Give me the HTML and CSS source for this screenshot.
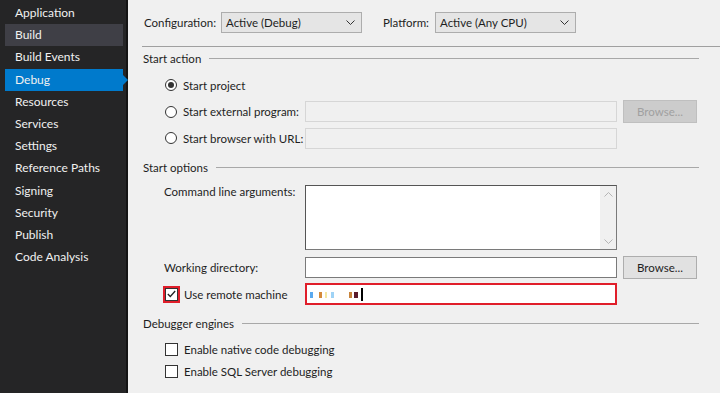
FILE: index.html
```html
<!DOCTYPE html>
<html lang="en">

<head>
    <meta charset="UTF-8">
    <title>Project Properties - Debug</title>
    <link rel="stylesheet" href="styles.css">
</head>

<body>
    <div class="app">
        <nav class="sidebar">
            <ul class="nav">
                <li>Application</li>
                <li class="hover">Build</li>
                <li>Build Events</li>
                <li class="active">Debug</li>
                <li>Resources</li>
                <li>Services</li>
                <li>Settings</li>
                <li>Reference Paths</li>
                <li>Signing</li>
                <li>Security</li>
                <li>Publish</li>
                <li>Code Analysis</li>
            </ul>
        </nav>

        <main class="page">
            <div class="toolbar">
                <span class="toolbar-label config-label">Configuration:</span>
                <div class="select">
                    <span>Active (Debug)</span>
                    <svg class="chevron" width="9" height="5" viewBox="0 0 9 5"><path d="M0.5 0.5 L4.5 4.5 L8.5 0.5" fill="none" stroke="#333" stroke-width="1"/></svg>
                </div>
                <span class="toolbar-label platform-label">Platform:</span>
                <div class="select">
                    <span>Active (Any CPU)</span>
                    <svg class="chevron" width="9" height="5" viewBox="0 0 9 5"><path d="M0.5 0.5 L4.5 4.5 L8.5 0.5" fill="none" stroke="#333" stroke-width="1"/></svg>
                </div>
            </div>

            <div class="rule"></div>

            <div class="section first-section"><span>Start action</span><div class="section-line"></div></div>

            <div class="field-row row-project">
                <label class="option"><span class="radio checked"></span>Start project</label>
            </div>
            <div class="field-row row-external">
                <label class="option"><span class="radio"></span>Start external program:</label>
                <div class="textbox disabled"></div>
                <button class="btn disabled">Browse...</button>
            </div>
            <div class="field-row row-url">
                <label class="option"><span class="radio"></span>Start browser with URL:</label>
                <div class="textbox disabled"></div>
            </div>

            <div class="section"><span>Start options</span><div class="section-line"></div></div>

            <div class="field-row row-args">
                <span class="field-label">Command line arguments:</span>
                <div class="textarea">
                    <div class="scrollbar">
                        <svg width="9" height="5" viewBox="0 0 9 5"><path d="M0.5 4.5 L4.5 0.5 L8.5 4.5" fill="none" stroke="#b5b5b5" stroke-width="1"/></svg>
                        <svg width="9" height="5" viewBox="0 0 9 5"><path d="M0.5 0.5 L4.5 4.5 L8.5 0.5" fill="none" stroke="#b5b5b5" stroke-width="1"/></svg>
                    </div>
                </div>
            </div>
            <div class="field-row row-workdir">
                <span class="field-label">Working directory:</span>
                <div class="textbox"></div>
                <button class="btn">Browse...</button>
            </div>
            <div class="field-row row-remote">
                <label class="option">
                    <span class="checkbox highlight">
                        <svg width="9" height="8" viewBox="0 0 9 8"><path d="M0.8 4 L3.3 6.5 L8.2 1" fill="none" stroke="#222" stroke-width="1.3"/></svg>
                    </span>Use remote machine
                </label>
                <!-- machine name is masked in the screenshot -->
                <div class="textbox highlight">
                    <span class="blob b1"></span>
                    <span class="blob b2"></span>
                    <span class="blob b3"></span>
                    <span class="blob b4"></span>
                    <span class="blob b5"></span>
                    <span class="blob b6"></span>
                    <span class="caret"></span>
                </div>
            </div>

            <div class="section"><span>Debugger engines</span><div class="section-line"></div></div>

            <div class="field-row row-native">
                <label class="option"><span class="checkbox"></span>Enable native code debugging</label>
            </div>
            <div class="field-row row-sql">
                <label class="option"><span class="checkbox"></span>Enable SQL Server debugging</label>
            </div>
        </main>
    </div>
</body>

</html>
```

FILE: styles.css
```css
* {
    margin: 0;
    padding: 0;
    box-sizing: border-box;
    font-family: 'Segoe UI', Lato, sans-serif;
}

body {
    background-color: #f0f0f0;
    font-size: 12px;
    color: #1e1e1e;
    overflow: hidden;
}

.app {
    display: flex;
    width: 720px;
    height: 393px;
}

/* left navigation */
.sidebar {
    width: 128px;
    flex-shrink: 0;
    background-color: #252526;
    border-right: 2px solid #141414;
}

.nav {
    list-style: none;
    padding-top: 2px;
}

.nav li {
    position: relative;
    height: 22.2px;
    line-height: 22px;
    margin-left: 5px;
    width: 118px;
    padding-left: 10px;
    color: #f1f1f1;
}

.nav li.hover {
    background-color: #3f3f46;
}

.nav li.active {
    background-color: #007acc;
}

.nav li.active::after {
    content: '';
    position: absolute;
    right: -5px;
    top: 6px;
    border-top: 5px solid transparent;
    border-bottom: 5px solid transparent;
    border-left: 5px solid #007acc;
}

/* main page */
.page {
    flex: 1;
    padding-top: 12px;
    padding-left: 14px;
    font-size: 11.5px;
}

.toolbar {
    display: flex;
    align-items: center;
    height: 21px;
    padding-left: 2px;
}

.config-label {
    width: 77px;
}

.platform-label {
    width: 52px;
    margin-left: 21px;
}

.select {
    width: 141px;
    height: 21px;
    background-color: #e5e5e5;
    border: 1px solid #adadad;
    display: flex;
    align-items: center;
    justify-content: space-between;
    padding: 0 4px 0 4px;
}

.chevron {
    margin-right: 2px;
}

.rule {
    height: 1px;
    background-color: #a0a0a0;
    margin-top: 13px;
}

.section {
    display: flex;
    align-items: center;
    gap: 8px;
    height: 16px;
    margin-top: 10px;
    margin-right: 21px;
    padding-left: 1px;
}

.first-section {
    margin-top: 3px;
}

.section-line {
    flex: 1;
    height: 1px;
    background-color: #a8a8a8;
}

.field-row {
    display: grid;
    grid-template-columns: 135px 312px 74px;
    column-gap: 6px;
    align-items: center;
    height: 22px;
    margin-left: 22px;
}

.option {
    display: flex;
    align-items: center;
    gap: 6px;
    white-space: nowrap;
}

.field-label {
    white-space: nowrap;
}

.radio {
    flex-shrink: 0;
    width: 12px;
    height: 12px;
    margin-left: 1px;
    border: 1px solid #333;
    border-radius: 50%;
    background-color: #fff;
    display: flex;
    align-items: center;
    justify-content: center;
}

.radio.checked::after {
    content: '';
    width: 6px;
    height: 6px;
    border-radius: 50%;
    background-color: #333;
}

.checkbox {
    flex-shrink: 0;
    width: 13px;
    height: 13px;
    margin-left: 1px;
    border: 1px solid #333;
    background-color: #fff;
    display: flex;
    align-items: center;
    justify-content: center;
}

.checkbox.highlight {
    outline: 2px solid #e01e2a;
    border-color: #333;
}

.textbox {
    height: 21px;
    background-color: #fff;
    border: 1px solid #7a7a7a;
    display: flex;
    align-items: center;
    padding-left: 5px;
}

.textbox.disabled {
    background-color: #f0f0f0;
    border-color: #d6d6d6;
}

.textbox.highlight {
    height: 22px;
    border: 2px solid #e01e2a;
    padding-left: 3px;
}

.blob {
    width: 3px;
    height: 6px;
    margin-top: 2px;
}

.b1 {
    background-color: #5aa9ef;
}

.b2 {
    background-color: #d48a3a;
    margin-left: 6px;
}

.b3 {
    width: 2px;
    background-color: #f3e7a2;
    margin-left: 3px;
}

.b4 {
    background-color: #9fd3f6;
    margin-left: 4px;
}

.b5 {
    background-color: #c8843c;
    margin-left: 15px;
}

.b6 {
    width: 4px;
    background-color: #5b1b2c;
    margin-left: 2px;
}

.caret {
    width: 2px;
    height: 13px;
    background-color: #000;
    margin-left: 3px;
}

.btn {
    height: 23px;
    font-size: 11.5px;
    background-color: #e1e1e1;
    border: 1px solid #adadad;
    color: #1e1e1e;
}

.btn.disabled {
    background-color: #cccccc;
    border-color: #bfbfbf;
    color: #a0a0a0;
}

.row-project {
    margin-top: 8px;
}

.row-external {
    margin-top: 4px;
}

.row-url {
    margin-top: 5px;
}

.row-args {
    align-items: start;
    height: auto;
    margin-top: 10px;
}

.textarea {
    height: 65px;
    background-color: #fff;
    border: 1px solid #7a7a7a;
    border-top-color: #555;
    border-left-color: #555;
    display: flex;
    justify-content: flex-end;
}

.scrollbar {
    width: 16px;
    background-color: #f0f0f0;
    display: flex;
    flex-direction: column;
    justify-content: space-between;
    align-items: center;
    padding: 6px 0 5px 0;
}

.row-workdir {
    margin-top: 6px;
}

.row-remote {
    margin-top: 5px;
}

.row-native {
    margin-top: 7px;
}
```
